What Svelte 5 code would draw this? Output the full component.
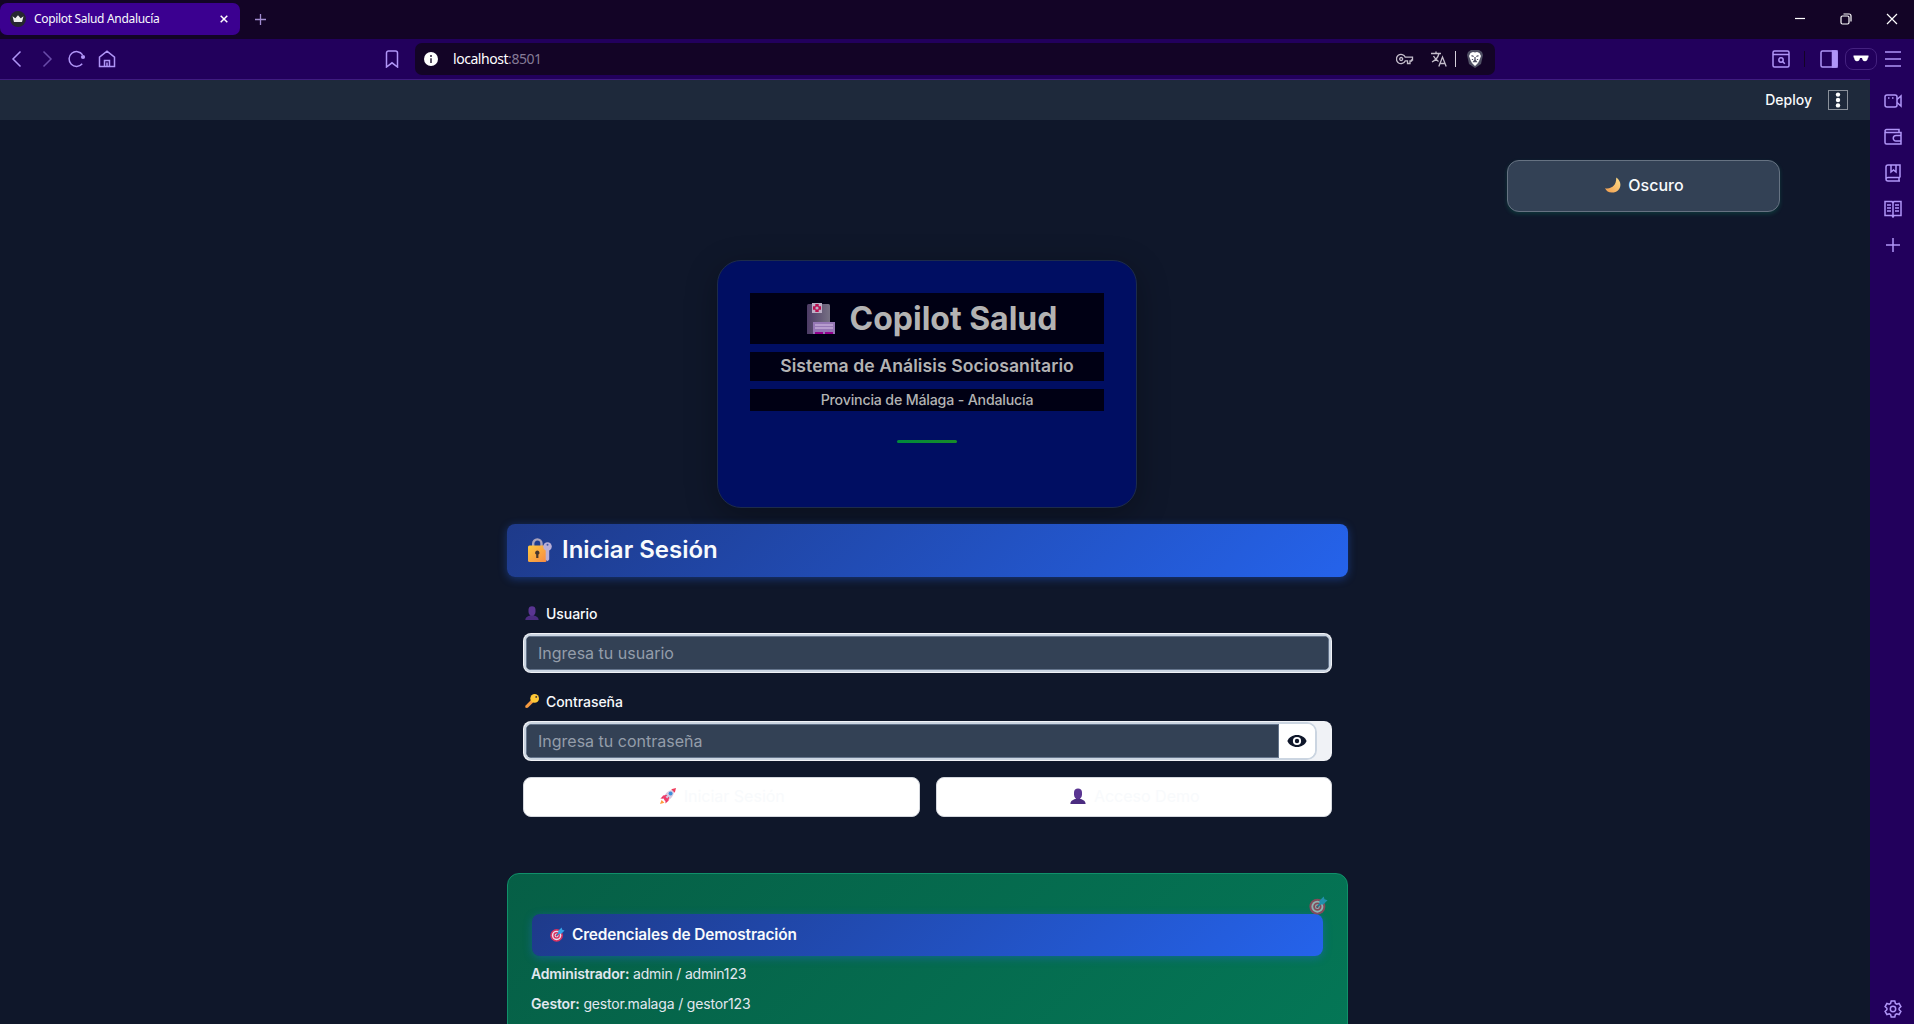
<script>
  const credentials = [
    { role: 'Administrador:', value: 'admin / admin123' },
    { role: 'Gestor:', value: 'gestor.malaga / gestor123' },
  ];
  let user = $state('');
  let password = $state('');
</script>

{#snippet target()}
  <svg viewBox="0 0 20 20" class="emoji">
    <circle cx="8.800" cy="11.200" r="8.400" fill="#d8315f" />
    <circle cx="8.800" cy="11.200" r="6.300" fill="#e9dff0" />
    <circle cx="8.800" cy="11.200" r="4.400" fill="#d8315f" />
    <circle cx="8.800" cy="11.200" r="2.500" fill="#e9dff0" />
    <circle cx="8.800" cy="11.200" r="1.300" fill="#b02252" />
    <path d="M9 11l6-6" stroke="#1e7fc4" stroke-width="1.6" />
    <path d="M11 9V5L15.500.5l.8 3 3.200 1-4.500 4.500z" fill="#35a3e8" />
  </svg>
{/snippet}

{#snippet bust()}
  <svg viewBox="0 0 20 20" class="emoji">
    <path d="M.5 20c0-4 3.500-5.500 7-6.500V12h5v1.500c3.500 1 7 2.500 7 6.500z" fill="#4b2c80" />
    <path d="M5 5.500C5 2 7 .5 10 .5s5 1.500 5 5v3c0 3.200-2.400 5.500-5 5.500s-5-2.300-5-5.500z" fill="#5a3592" />
  </svg>
{/snippet}

<div class="window">
  <div class="titlebar">
    <div class="tab">
      <svg class="favicon" viewBox="0 0 16 16">
        <circle cx="8" cy="8" r="8" fill="#262730" />
        <path d="M2.500 5.300l2.800 2 2.700-3 2.700 3 2.800-2-1.500 5.700H4z" fill="#eee" />
      </svg>
      <span class="tab-title">Copilot Salud Andalucía</span>
      <svg class="tab-close" viewBox="0 0 8 8"><path d="M.7.7l6.600 6.600M7.300.7L.7 7.300" /></svg>
    </div>
    <svg class="new-tab" viewBox="0 0 11 11"><path d="M5.500 0v11M0 5.500h11" /></svg>
    <div class="controls">
      <svg viewBox="0 0 12 12"><path d="M1 5.500h10" /></svg>
      <svg viewBox="0 0 12 12"><rect x="1" y="3" width="8" height="8" rx="1.500" /><path d="M3.500 1H9a2 2 0 0 1 2 2v5.500" /></svg>
      <svg viewBox="0 0 12 12"><path d="M1 1l10 10M11 1L1 11" /></svg>
    </div>
  </div>

  <div class="toolbar">
    <div class="nav">
      <svg viewBox="0 0 18 18"><path d="M12.500 1.500L5 9l7.500 7.500" /></svg>
      <svg viewBox="0 0 18 18" class="dim"><path d="M5.500 1.500L13 9l-7.500 7.500" /></svg>
      <svg viewBox="0 0 18 18"><path d="M14.200 13.700A7.400 7.400 0 1 1 14.600 4.800" /><circle cx="15" cy="7" r="2.100" class="solid" stroke="none" /></svg>
      <svg viewBox="0 0 18 18"><path d="M1.500 7.200L9 1.200l7.500 6V16.500h-15zM6.500 16.500v-6h5v6M9 16.500v-4" /></svg>
    </div>
    <svg class="bookmark" viewBox="0 0 18 18"><path d="M3.500 3a2 2 0 0 1 2-2h7a2 2 0 0 1 2 2v14L9 12.800 3.500 17z" /></svg>
    <div class="address">
      <svg class="info" viewBox="0 0 14 14"><circle cx="7" cy="7" r="7" fill="#fff" /><path d="M7 3v2M7 6.200V11" stroke="#4b4058" stroke-width="1.800" /></svg>
      <span class="url">localhost<span>:8501</span></span>
      <div class="address-icons">
        <svg viewBox="0 0 18 18"><path d="M9.300 7.200a4.600 4.600 0 1 0 0 3.600h2.200v2.700h2.500v-2.500h1.500v-1h1V7.200z" /><circle cx="5.200" cy="9" r="1.500" /></svg>
        <svg viewBox="0 0 18 18" class="translate"><path d="M1 3.500h10M6 1.500v2M9 3.500C8 7.500 5 10.500 2 12M3.500 6c1 2 3 4 5 5.500M8.800 16.500l3.700-9.500 3.700 9.500M10.200 13.500h4.700" /></svg>
        <i></i>
        <svg viewBox="0 0 18 20" class="shield">
          <path d="M2 3l3-2h8l3 2 1 3-2 9-6 4-6-4L1 6z" fill="#505064" />
          <path d="M4.500 4l2.500-1 2 .6L11 3l2.500 1 1.500 3-1.500 4-1.500 3-3 3-3-3-1.500-3L3 7z" fill="#fff" />
          <path d="M5.500 6.700l2.200.8M12.500 6.700l-2.200.8M9 8v3l-1.200 1.500h2.400L9 11M6.500 10v1M11.500 10v1" stroke="#505064" />
        </svg>
      </div>
    </div>
    <div class="tools">
      <svg viewBox="0 0 18 18"><rect x="1" y="1" width="16" height="16" rx="1.500" /><path d="M1 4.500h16M10.800 11.800l2 2" /><circle cx="9" cy="10" r="2.200" /></svg>
      <i></i>
      <svg viewBox="0 0 18 18"><rect x="1" y="1" width="16" height="16" rx="1.500" /><path d="M12.500 1H17v16h-4.500z" class="solid" /></svg>
      <span class="private">
        <svg viewBox="0 0 16 8"><path d="M.5.5h15v2h-.6C14.700 5 13.700 6.300 12 6.300S9.300 5 9 3H7C6.700 5 5.700 6.300 4 6.300S1.300 5 1.100 2.500H.5z" fill="#fff" /></svg>
      </span>
      <svg viewBox="0 0 18 18" class="menu"><path d="M1 2h16M1 9h16M1 16h16" /></svg>
    </div>
  </div>

  <div class="body">
    <main>
      <header>
        <span>Deploy</span>
        <button class="kebab" aria-label="Menu"><svg viewBox="0 0 6 16"><circle cx="3" cy="2.600" r="2.200" /><circle cx="3" cy="8" r="2.200" /><circle cx="3" cy="13.400" r="2.200" /></svg></button>
      </header>

      <div class="theme-row">
        <button class="theme">
          <svg viewBox="0 0 20 20" class="emoji">
            <defs><linearGradient id="moon" x1="0" y1="1" x2="1" y2="0"><stop offset="0" stop-color="#f09a4c" /><stop offset="1" stop-color="#ffe08a" /></linearGradient></defs>
            <path d="M14 .5c9 6 6 19-5.500 19C4.500 19.500 1.500 17.500 0 14 9 15.500 14.500 10 14 .5z" fill="url(#moon)" />
          </svg>
          Oscuro
        </button>
      </div>

      <section class="brand">
        <h1>
          <svg viewBox="0 0 28 31">
            <defs><linearGradient id="tower"><stop offset="0" stop-color="#4c3b65" /><stop offset="1" stop-color="#777184" /></linearGradient></defs>
            <path d="M0 2.500q0-1.500 1.500-1.500h20q1.500 0 1.500 1.500V31H0z" fill="url(#tower)" />
            <path d="M5 0h10v10H5z" fill="#bbaec5" />
            <path d="M8.300 1h3.400v2.300H14v3.400h-2.300V9H8.300V6.700H6V3.300h2.300z" fill="#b80f50" />
            <circle cx="10" cy="5" r="1.600" fill="#bbaec5" />
            <path d="M6 19h22v12H6z" fill="#9577b5" />
            <path d="M8 22h18M8 25h18" stroke="#c2aad6" stroke-width="1.400" />
            <path d="M8 29h8v2H8zM18 29h8v2h-8z" fill="#94008d" />
          </svg>
          <span>Copilot Salud</span>
        </h1>
        <h3>Sistema de Análisis Sociosanitario</h3>
        <p>Provincia de Málaga - Andalucía</p>
        <div class="accent"></div>
      </section>

      <section class="login">
        <h2>
          <svg viewBox="0 0 24 24">
            <defs><linearGradient id="lock" x1="0" y1="0" x2="1" y2="1"><stop offset="0" stop-color="#ffc83d" /><stop offset="1" stop-color="#f58a45" /></linearGradient></defs>
            <path d="M5.200 9V5.500a4 4 0 0 1 8.300 0V9" stroke="#a9a2bb" stroke-width="2.400" />
            <rect x="0" y="7.500" width="18.500" height="16.500" rx="1.500" fill="url(#lock)" />
            <path d="M9.300 12.500a2.200 2.200 0 0 1 1.100 4.100V20H8.200v-3.400a2.200 2.200 0 0 1 1.100-4.100z" fill="#46352d" />
            <circle cx="19.500" cy="8.500" r="4.300" fill="#b9afd6" />
            <path d="M17.700 12h3.500v9.500l-1.500 1.800-2-1.600z" fill="#b9afd6" />
            <circle cx="19.500" cy="6.800" r="1" fill="#4159a8" />
          </svg>
          <span>Iniciar Sesión</span>
        </h2>

        <form onsubmit={(e) => e.preventDefault()}>
          <label for="user">{@render bust()} Usuario</label>
          <div class="field">
            <div class="field-inner"><input id="user" placeholder="Ingresa tu usuario" bind:value={user} /></div>
          </div>
          <label for="password">
            <svg viewBox="0 0 20 20" class="emoji">
              <path d="M10 7l3.500 3.500L4 19.500 1 20l-.8-3z" fill="#f59a40" />
              <circle cx="13.800" cy="6.300" r="6.200" fill="#ffc936" />
              <circle cx="16" cy="4.200" r="1.300" fill="#3a2c35" />
            </svg>
            Contraseña
          </label>
          <div class="field secret">
            <div class="field-inner">
              <input id="password" type="password" placeholder="Ingresa tu contraseña" bind:value={password} />
              <button type="button" class="eye" aria-label="Mostrar">
                <svg viewBox="0 0 20 14"><path d="M10 1C5.500 1 1.800 3.500.4 7 1.800 10.500 5.500 13 10 13s8.200-2.500 9.600-6C18.200 3.500 14.500 1 10 1z" fill="#0f172a" /><circle cx="10" cy="7" r="4.100" fill="#fff" /><circle cx="10" cy="7" r="2.200" fill="#0f172a" /></svg>
              </button>
            </div>
          </div>
          <div class="actions">
            <button>
              <svg viewBox="0 0 20 20" class="emoji">
                <path d="M5 9L.5 13l5 .5zM11 15l-4 4.500L6.500 14z" fill="#e62e5c" />
                <path d="M2 15L0 20l5.500-1.500z" fill="#ff9b3d" />
                <path d="M4 13C6 7 10 2.500 16 2.500l1.500 1.500c0 6-4.500 10.500-10.500 12.500z" fill="#d5c9e2" />
                <path d="M14 1.500L20 0l-1.500 6z" fill="#f03c5c" />
                <path d="M3 10l5-1.500 3.500 3.500L10 17l-4-1z" fill="#f03c6a" />
                <path d="M7 11l4-3 1 1-3 4z" fill="#d5c9e2" />
                <circle cx="13.200" cy="6.800" r="2.500" fill="#3e8fd8" />
              </svg>
              Iniciar Sesión
            </button>
            <button>{@render bust()} Acceso Demo</button>
          </div>
        </form>
      </section>

      <section class="demo">
        <span class="pin">{@render target()}</span>
        <h4>{@render target()} Credenciales de Demostración</h4>
        {#each credentials as item}
          <p><strong>{item.role}</strong> {item.value}</p>
        {/each}
      </section>
    </main>

    <aside>
      <svg viewBox="0 0 18 18"><rect x="1" y="3" width="12" height="12" rx="2" /><path d="M13 7.500L17 4v10l-4-3.500M4 6h1.500M8 6h1.500" /></svg>
      <svg viewBox="0 0 18 18"><path d="M1 4v10.500A1.500 1.500 0 0 0 2.500 16H17V4.500H2.500A1.500 1.500 0 0 1 1 3a1.500 1.500 0 0 1 1.500-1.500H15v3M17 7.500h-5a2.200 2.200 0 0 0 0 5.500h5" /></svg>
      <svg viewBox="0 0 18 18"><path d="M16 13.500V1H4a2 2 0 0 0-2 2v12a2 2 0 0 0 2 2h12M16 13.500H4A2 2 0 0 0 2 15M7 1v7l2.500-2L12 8V1M15 13.500V17" /></svg>
      <svg viewBox="0 0 18 18"><path d="M9 3L8 1.500H1V15.500h7l1 1.500 1-1.500h7V1.500h-7zM9 3v14M3 5h4M3 8h4M3 11h4M11 5h4M11 8h4M11 11h4" /></svg>
      <svg viewBox="0 0 18 18"><path d="M9 2v14M2 9h14" /></svg>
      <svg viewBox="0 0 18 18" class="gear"><path d="M7.200 1h3.600l.6 2.400 1.300.8 2.400-.7 1.800 3.100L15.100 8.300v1.400l1.800 1.700-1.800 3.100-2.400-.7-1.300.8-.6 2.400H7.200l-.6-2.400-1.300-.8-2.400.7-1.800-3.100L2.900 9.700V8.300L1.100 6.600l1.800-3.100 2.400.7 1.300-.8z" /><circle cx="9" cy="9" r="2.700" /></svg>
    </aside>
  </div>
</div>

<style>
  :global(body) { margin: 0; background: #0f172a; }
  .window {
    height: 1024px; overflow: hidden; display: flex; flex-direction: column;
    font-family: Inter, "Liberation Sans", sans-serif; color: #f8fafc;
  }
  .window *, .window { box-sizing: border-box; }
  svg { flex: none; fill: none; }
  h1, h2, h3, h4, p { margin: 0; }
  button { font-family: inherit; padding: 0; }

  .titlebar { height: 39px; flex: none; background: #130426; display: flex; align-items: flex-start; }
  .tab {
    width: 240px; height: 32px; margin-top: 3px; padding: 0 12px 0 10px;
    background: #3b0090; border-radius: 7px; display: flex; align-items: center;
    font-family: "Noto Sans", sans-serif; font-size: 12px;
  }
  .favicon { width: 16px; height: 16px; margin-right: 8px; }
  .tab-title { flex: 1; letter-spacing: -0.32px; white-space: nowrap; padding-bottom: 1px; }
  .tab-close { width: 8px; height: 8px; stroke: #fff; stroke-width: 1.5; }
  .new-tab { width: 11px; height: 11px; margin: 14px 0 0 15px; stroke: #a18bd0; stroke-width: 1.3; }
  .controls { margin-left: auto; display: flex; gap: 34px; padding: 13px 16px 0 0; }
  .controls svg { width: 12px; height: 12px; stroke: #fff; stroke-width: 1.2; }

  .toolbar {
    height: 41px; flex: none; background: #22005c; border-bottom: 1px solid #3f1c80;
    display: flex; align-items: center; stroke: #b095f7;
  }
  .toolbar svg { stroke-width: 1.5; }
  .nav { display: flex; gap: 12px; padding-left: 8px; }
  .nav svg, .tools > svg, .bookmark { width: 18px; height: 18px; }
  .nav .dim { opacity: .5; }
  .solid { fill: #b095f7; }
  .bookmark { margin-left: 267px; }
  .address {
    width: 1080px; height: 32px; margin-left: 14px; padding: 0 11px 0 9px; background: #130426; border-radius: 7px;
    display: flex; align-items: center;
  }
  .info { width: 14px; height: 14px; margin-right: 15px; stroke: none; }
  .url { font: 14px "Noto Sans", sans-serif; letter-spacing: -0.45px; color: #fff; flex: 1; padding-bottom: 1px; }
  .url span { color: #857b96; }
  .address-icons { display: flex; align-items: center; stroke: #c4bdcb; }
  .address-icons svg { width: 18px; height: 18px; stroke-width: 1.3; }
  .address-icons .translate { margin-left: 16px; }
  .address-icons i { width: 1px; height: 16px; margin: 0 10px 0 7px; background: #d5cfdb; }
  .address-icons .shield { height: 20px; stroke: none; }
  .tools { margin-left: auto; display: flex; align-items: center; padding-right: 12px; }
  .tools i { width: 1px; height: 16px; margin: 0 15px 0 14px; background: #130426; }
  .private {
    width: 32px; height: 22px; margin: 0 7px; border: 1px solid #44217f; border-radius: 8px;
    display: flex; align-items: center; justify-content: center;
  }
  .private svg { width: 16px; height: 8px; stroke: none; }

  .body { flex: 1; min-height: 0; display: flex; }
  main { flex: 1; overflow: hidden; background: #0f172a; }
  aside {
    width: 44px; background: #22005c; margin-top: -1px; padding: 13px 12px 6px 14px; stroke: #b095f7;
    display: flex; flex-direction: column; align-items: center; gap: 18px;
  }
  aside svg { width: 18px; height: 18px; stroke-width: 1.5; }
  .gear { margin-top: auto; }

  header {
    height: 40px; background: #1e293b; display: flex; align-items: center; justify-content: flex-end;
    gap: 16px; padding-right: 22px; font-size: 14px; font-weight: 500;
  }
  header span { padding-bottom: 1px; }
  .kebab {
    width: 20px; height: 20px; background: none; border: 1px solid #8a919b;
    display: flex; align-items: center; justify-content: center;
  }
  .kebab svg { width: 6px; height: 16px; fill: #fff; }

  .theme-row { display: flex; justify-content: flex-end; padding: 40px 90px 0 0; }
  .theme {
    width: 273px; height: 52px; background: #334155; border: 1px solid #667282; border-radius: 12px;
    box-shadow: 0 2px 4px rgba(16, 185, 129, .2); color: #f8fafc; font-size: 16px; font-weight: 500;
    display: flex; align-items: center; justify-content: center; gap: 7px; padding: 0 0 2px 2px;
  }
  .emoji { width: 16px; height: 16px; }

  .brand {
    width: 420px; height: 248px; margin: 48px 0 0 717px;
    background: #000e62; border: 1px solid #1d2b4a; border-radius: 24px; padding: 32px;
    box-shadow: 0 8px 32px rgba(0, 0, 0, .3); color: #b3b3b3; text-align: center;
  }
  .brand h1 {
    height: 51px; background: #000014; display: flex; align-items: center; justify-content: center;
    gap: 15px; padding-left: 10px; font-size: 32px; font-weight: 700; letter-spacing: -0.02px;
  }
  .brand h1 svg { width: 28px; height: 31px; }
  .brand h3 { height: 29px; line-height: 28px; margin-top: 8px; background: #000014; font-size: 17.6px; font-weight: 600; letter-spacing: .07px; }
  .brand p { height: 22px; line-height: 22px; margin-top: 8px; background: #000014; font-size: 14.2px; font-weight: 500; letter-spacing: -.18px; }
  .accent { width: 60px; height: 3px; margin: 29px auto 0; border-radius: 2px; background: linear-gradient(90deg, #008a3c, #188c28); }

  .login, .demo { width: 841px; margin-left: 507px; }
  .login { position: relative; }
  .login h2 {
    height: 53px; margin-top: 16px; padding: 0 21px 2px; border-radius: 8px;
    background: linear-gradient(135deg, #1e3a8a, #2563eb); box-shadow: 0 2px 8px rgba(37, 99, 235, .4);
    display: flex; align-items: center; gap: 10px; font-size: 24px; font-weight: 600;
  }
  .login h2 svg { width: 24px; height: 24px; }
  form { padding: 24px 16px 0; }
  label { height: 24px; margin-bottom: 8px; padding-left: 2px; display: flex; align-items: center; gap: 7px; font-size: 14px; font-weight: 500; letter-spacing: -.05px; }
  label .emoji { width: 14px; height: 14px; }
  .field { height: 40px; margin-bottom: 16px; border-radius: 8px; background: #f0f2f6; padding: 1px; }
  .field-inner { height: 38px; border: 2px solid #cbd5e1; border-radius: 7px; display: flex; background: #fff; overflow: hidden; }
  input {
    flex: 1; min-width: 0; border: 1px solid #64748b; border-radius: 0; background: #334155; padding: 0 11px;
    font: 400 16px Inter, sans-serif; color: #f8fafc; outline: none;
  }
  input::placeholder { color: #949daa; opacity: 1; }
  .field.secret { padding-right: 15px; }
  .secret .field-inner { border-radius: 8px 10px 10px 8px; }
  .eye { width: 36px; border: 0; background: #fff; display: flex; align-items: center; justify-content: center; }
  .eye svg { width: 20px; height: 14px; }
  .actions { display: grid; grid-template-columns: 1fr 1fr; gap: 16px; }
  .actions button {
    height: 40px; border: 1px solid #d4d7dd; border-radius: 8px; background: #fff; color: #f8fafc; padding: 0 0 2px 2px;
    font-size: 16px; font-weight: 400; display: flex; align-items: center; justify-content: center; gap: 8px;
  }

  .demo {
    height: 240px; margin-top: 56px; padding: 40px 24px; border: 1px solid #10906a; border-radius: 12px;
    background: linear-gradient(135deg, #065f46, #047857); position: relative; color: #e2e8f0;
  }
  .pin { position: absolute; right: 19px; top: 22px; opacity: .6; }
  .pin .emoji { display: block; width: 19px; height: 19px; }
  .demo h4 {
    height: 42px; margin-bottom: 3px; padding: 0 18px 2px; border-radius: 8px; color: #f8fafc;
    background: linear-gradient(135deg, #1e3a8a, #2563eb); box-shadow: 0 2px 8px rgba(37, 99, 235, .4);
    display: flex; align-items: center; gap: 7px; font-size: 15.4px; font-weight: 600; letter-spacing: -.12px;
  }
  .demo h4 .emoji { width: 15px; height: 15px; }
  .demo p { height: 30px; line-height: 30px; margin-left: -1px; font-size: 14px; letter-spacing: -.17px; }
  .demo strong { font-weight: 600; }
</style>
